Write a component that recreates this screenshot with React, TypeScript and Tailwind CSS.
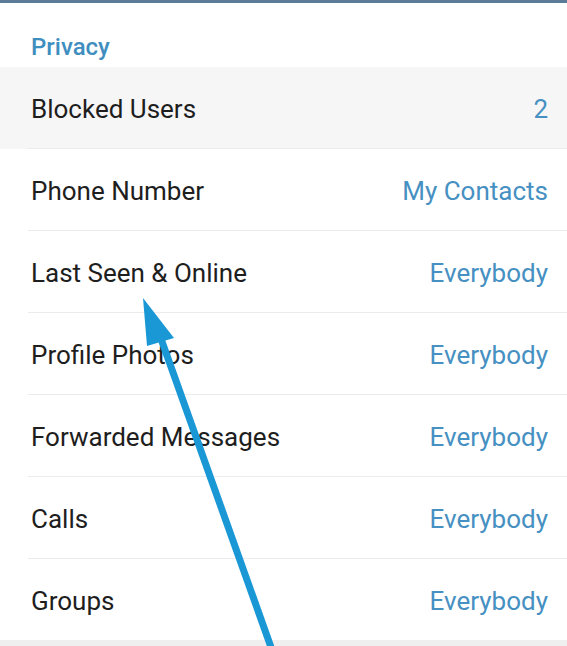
import React from "react";

const rows = [
  { label: "Blocked Users", value: "2", active: true },
  { label: "Phone Number", value: "My Contacts" },
  { label: "Last Seen & Online", value: "Everybody" },
  { label: "Profile Photos", value: "Everybody" },
  { label: "Forwarded Messages", value: "Everybody" },
  { label: "Calls", value: "Everybody" },
  { label: "Groups", value: "Everybody", last: true },
];

export default function App() {
  return (
    <div className="relative h-[646px] w-[567px] overflow-hidden bg-white font-['Roboto',sans-serif]">
      <div className="h-[3px] bg-[#5b7a97]" />
      <div className="flex h-[64px] items-end px-[31px] pb-[2px]">
        <span className="text-[24px] font-medium text-[#3f8ec0]">Privacy</span>
      </div>
      <div>
        {rows.map((row) => (
          <div key={row.label} className={row.active ? "bg-[#f6f6f6]" : "bg-white"}>
            <div className="flex h-[81px] items-center justify-between pt-[3px] pl-[31px] pr-[19px]">
              <span className="text-[26px] text-[#1e1e1e]">{row.label}</span>
              <span className="text-[26px] text-[#4690c2]">{row.value}</span>
            </div>
            {!row.last && <div className="ml-[28px] h-px bg-[#ececec]" />}
          </div>
        ))}
      </div>
      <div className="h-[8px] bg-[#efefef]" />

      {/* annotation arrow */}
      <svg className="pointer-events-none absolute inset-0" width="567" height="646" viewBox="0 0 567 646">
        <line x1="160" y1="336" x2="272" y2="650" stroke="#1a98d5" strokeWidth="7" />
        <polygon points="143,298 147,346 174,338" fill="#1a98d5" />
      </svg>
    </div>
  );
}
